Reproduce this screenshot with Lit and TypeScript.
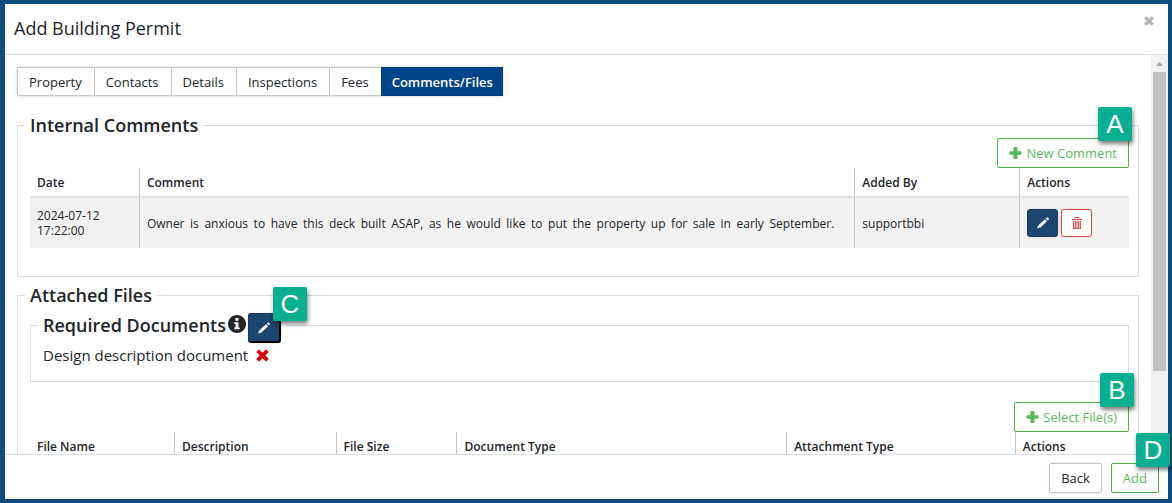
import { LitElement, html, css } from "lit";
import { customElement, state } from "lit/decorators.js";

const plus = html`<svg class="ico" width="13" height="12" viewBox="0 0 13 12" aria-hidden="true"><path d="M5 0h3q.5 0 .5.500V4.200H12q.600 0 .600.600v2.400q0 .600-.6.600H8.500v3.600q0 .600-.5.600H5q-.6 0-.6-.6V7.800H1q-.6 0-.6-.6V4.800q0-.6.6-.6h3.400V.6Q4.400 0 5 0z" fill="currentColor"/></svg>`;
const cross = (size: number) => html`<svg class="ico" width=${size} height=${size} viewBox="0 0 12 12" aria-hidden="true"><path d="M3.200.6 6 3.400 8.800.6q.4-.4.800 0l1.800 1.800q.4.400 0 .8L8.600 6l2.800 2.800q.4.400 0 .8l-1.800 1.800q-.4.400-.8 0L6 8.600l-2.800 2.800q-.4.400-.8 0L.6 9.600q-.4-.4 0-.8L3.400 6 .6 3.200q-.4-.4 0-.8L2.400.6q.4-.4.800 0z" fill="currentColor"/></svg>`;
const pencil = html`<svg class="ico" width="14" height="14" viewBox="0 0 14 14" aria-hidden="true"><path d="M1 12.500l1.400-3.300L9 3.200l2 2-6.300 6zM9.800 2.500l1-.9q.5-.4 1 0l.9.900q.4.500 0 1l-.9 1z" fill="currentColor"/></svg>`;
const trash = html`<svg class="ico" width="12" height="14" viewBox="0 0 12 14" aria-hidden="true"><path d="M4 2.500v-1h4v1M1 3.500h10" fill="none" stroke="currentColor"/><path d="M2 5h8v8H2z" fill="currentColor" opacity=".4"/><path d="M2.500 5v8M4.500 5v8M7.500 5v8M9.500 5v8M2 12.500h8" fill="none" stroke="currentColor" stroke-width=".8"/></svg>`;
const info = html`<svg class="info" width="18" height="18" viewBox="8 8 496 496" role="img" aria-label="Info"><path fill="currentColor" d="M256 8C119.043 8 8 119.083 8 256c0 136.997 111.043 248 248 248s248-111.003 248-248C504 119.083 392.957 8 256 8z"/><path fill="#fff" d="M212 92h84v76h-84zM180 206h116v144h34v52H178v-52h36v-92h-34z"/></svg>`;

@customElement("app-root")
export class AppRoot extends LitElement {
  @state() private tab = "Comments/Files";

  private tabs = ["Property", "Contacts", "Details", "Inspections", "Fees", "Comments/Files"];
  private fileColumns = ["File Name", "Description", "File Size", "Document Type", "Attachment Type", "Actions"];

  static styles = css`
    :host { display: block; font: 13px/20px "Open Sans", sans-serif; color: #212529; }
    * { box-sizing: border-box; }
    button { font: inherit; color: inherit; margin: 0; cursor: pointer; }
    .ico, .info { display: block; flex: none; }
    .dialog { height: 100vh; border: 4px solid #0e4e7e; border-left-width: 5px; background: #fff; display: flex; flex-direction: column; }
    .head { flex: none; height: 51px; padding: 0 14px 0 9px; border-bottom: 1px solid #dee0e6; display: flex; justify-content: space-between; }
    h1 { margin: 0; font-size: 18px; line-height: 48px; font-weight: 400; }
    .close { border: 0; padding: 0; margin-top: 12px; height: 10px; background: none; color: #b2b2b2; }
    .body { flex: 1; min-height: 0; display: flex; }
    .content { flex: 1; min-width: 0; overflow: auto; scrollbar-width: none; padding: 12px; }
    .bar { flex: none; width: 17px; background: #f1f1f1; padding: 0 2px; display: flex; flex-direction: column; }
    .bar svg { display: block; height: 17px; }
    .thumb { height: 75%; background: #c1c1c1; }
    .tabs { display: inline-flex; vertical-align: top; box-shadow: 0 0 3px rgba(0, 0, 0, .2); border-radius: 2px; }
    .tab { height: 29px; padding: 0 12px 0 11px; background: #fff; border: 1px solid #c8c8c8; border-right-width: 0; }
    .tab.on { padding: 0 10px; background: #004489; border-color: #003a75; color: #fff; font-weight: 600; }
    fieldset { min-width: 0; margin: 0; border: 1px solid #dcdcdc; padding: 0 9px 0 12px; }
    legend { margin-left: -5px; padding: 0 5px; font-size: 18px; line-height: 24px; font-weight: 600; display: flex; gap: 2px; }
    .comments { margin-top: 17px; padding-top: 1px; padding-bottom: 28px; }
    .files { margin-top: 6px; padding-top: 6px; padding-bottom: 28px; }
    .required { height: 69px; }
    .required legend { height: 24px; }
    .info { margin-top: 2px; }
    .missing { display: flex; align-items: center; gap: 8px; margin: 0; font-size: 15px; line-height: 36px; }
    .missing .ico { color: #d40511; }
    .tools { display: flex; justify-content: flex-end; }
    .files .tools { margin-top: 20px; }
    .btn { position: relative; height: 30px; padding: 0 11px; display: flex; align-items: center; gap: 4px; background: #fff; border: 1px solid #c4c4c4; border-radius: 2px; box-shadow: 0 0 2px rgba(0, 0, 0, .15); }
    .green { color: #5cb85c; border-color: #4cae4c; box-shadow: none; }
    .icon { width: 31px; height: 28px; padding: 0; justify-content: center; border-radius: 3px; }
    .edit { background: #1c466f; border-color: #173c60; color: #fff; }
    .delete { color: #d9443f; border-color: #d9443f; }
    .focus { width: 33px; height: 30px; border-width: 1px 2px 2px 1px; border-right-color: #000; border-bottom-color: #000; }
    .badge { position: absolute; z-index: 1; width: 34px; height: 34px; border-radius: 2px; background: #08ae90; color: #fff; font: 26px/34px "Liberation Sans", sans-serif; text-align: center; box-shadow: 1px 3px 4px rgba(0, 0, 0, .5); }
    .a { right: -4px; top: -32px; }
    .b { right: -6px; top: -30px; }
    .c { right: -28px; top: -27px; }
    .d { right: -12px; top: -31px; }
    table { width: 100%; table-layout: fixed; border-collapse: separate; border-spacing: 0; font-size: 12px; line-height: 15px; }
    th, td { padding: 0 7px; text-align: left; border-right: 1px solid #c8c8c8; }
    th:last-child, td:last-child { border-right: 0; }
    th { height: 30px; font-weight: 600; border-bottom: 2px solid #dee2e6; }
    td { height: 50px; background: #f1f1f1; }
    .text { padding-right: 20px; text-align: justify; text-align-last: justify; }
    .acts { display: flex; gap: 3px; }
    .w-date { width: 10%; } .w-by { width: 15%; } .w-act { width: 9.9%; }
    .w-0 { width: 13.2%; } .w-1 { width: 14.7%; } .w-2 { width: 11%; } .w-3 { width: 30%; } .w-4 { width: 20.8%; }
    .foot { flex: none; height: 45px; padding: 8px 9px 0; border-top: 1px solid #dcdee2; display: flex; justify-content: flex-end; gap: 9px; }
  `;

  render() {
    return html`
      <div class="dialog" role="dialog" aria-label="Add Building Permit">
        <header class="head">
          <h1>Add Building Permit</h1>
          <button class="close" aria-label="Close">${cross(10)}</button>
        </header>
        <div class="body">
          <main class="content">
            <nav class="tabs">
              ${this.tabs.map((t) => html`<button class="tab ${t === this.tab ? "on" : ""}" @click=${() => (this.tab = t)}>${t}</button>`)}
            </nav>
            <fieldset class="comments">
              <legend>Internal Comments</legend>
              <div class="tools"><button class="btn green">${plus}New Comment<span class="badge a">A</span></button></div>
              <table>
                <thead><tr><th class="w-date">Date</th><th>Comment</th><th class="w-by">Added By</th><th class="w-act">Actions</th></tr></thead>
                <tbody><tr>
                  <td>2024-07-12 17:22:00</td>
                  <td class="text">Owner is anxious to have this deck built ASAP, as he would like to put the property up for sale in early September.</td>
                  <td>supportbbi</td>
                  <td><div class="acts">
                    <button class="btn icon edit" aria-label="Edit">${pencil}</button>
                    <button class="btn icon delete" aria-label="Delete">${trash}</button>
                  </div></td>
                </tr></tbody>
              </table>
            </fieldset>
            <fieldset class="files">
              <legend>Attached Files</legend>
              <fieldset class="required">
                <legend>Required Documents ${info}<button class="btn icon edit focus" aria-label="Edit required documents">${pencil}<span class="badge c">C</span></button></legend>
                <p class="missing">Design description document ${cross(13)}</p>
              </fieldset>
              <div class="tools"><button class="btn green">${plus}Select File(s)<span class="badge b">B</span></button></div>
              <table>
                <thead><tr>${this.fileColumns.map((c, i) => html`<th class="w-${i}">${c}</th>`)}</tr></thead>
              </table>
            </fieldset>
          </main>
          <div class="bar" aria-hidden="true">
            <svg viewBox="0 0 13 17"><path d="M3 11l3.500-4 3.500 4z" fill="#a3a3a3"/></svg>
            <div class="thumb"></div>
          </div>
        </div>
        <footer class="foot">
          <button class="btn">Back</button>
          <button class="btn green">Add<span class="badge d">D</span></button>
        </footer>
      </div>
    `;
  }
}
